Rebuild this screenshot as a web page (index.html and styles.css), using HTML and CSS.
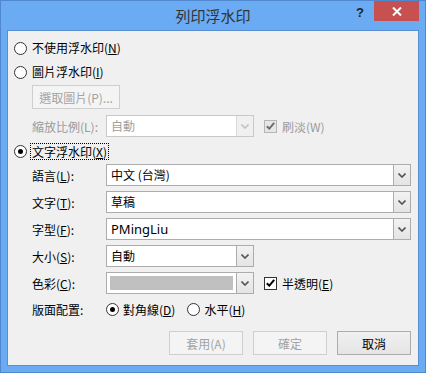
FILE: index.html
```html
<!DOCTYPE html>
<html lang="zh-Hant">
<head>
  <meta charset="UTF-8">
  <title>列印浮水印</title>
  <link rel="stylesheet" href="styles.css">
</head>
<body>
  <div class="window">
    <div class="titlebar">
      <div class="title">列印浮水印</div>
      <div class="controls">
        <span class="help">?</span>
        <span class="close">
          <svg width="10" height="9" viewBox="0 0 10 9"><path d="M1 0.5 L9 8.5 M9 0.5 L1 8.5" stroke="#fff" stroke-width="2"/></svg>
        </span>
      </div>
    </div>

    <div class="panel">
      <div class="opt first">
        <span class="radio"></span>
        <span>不使用浮水印(<u>N</u>)</span>
      </div>
      <div class="opt second">
        <span class="radio"></span>
        <span>圖片浮水印(<u>I</u>)</span>
      </div>

      <div class="indent">
        <button class="btn pick" disabled>選取圖片(P)...</button>

        <div class="field scale">
          <span class="label dim">縮放比例(L):</span>
          <div class="combo short off">
            <span class="value">自動</span>
            <span class="arrow"><svg width="8" height="5" viewBox="0 0 8 5"><path d="M0.5 0.5 L4 4 L7.5 0.5" fill="none" stroke="#c2c2c2" stroke-width="1.6"/></svg></span>
          </div>
          <span class="check off">
            <svg width="9" height="8" viewBox="0 0 9 8"><path d="M0.8 4.2 L3.3 6.6 L8.2 0.8" fill="none" stroke="#6d6d6d" stroke-width="2"/></svg>
          </span>
          <span class="dim">刷淡(W)</span>
        </div>
      </div>

      <div class="opt third">
        <span class="radio on"></span>
        <span class="focus">文字浮水印(<u>X</u>)</span>
      </div>

      <div class="indent">
        <div class="field lang">
          <span class="label">語言(<u>L</u>):</span>
          <div class="combo long">
            <span class="value">中文 (台灣)</span>
            <span class="arrow"><svg width="8" height="5" viewBox="0 0 8 5"><path d="M0.5 0.5 L4 4 L7.5 0.5" fill="none" stroke="#555" stroke-width="1.6"/></svg></span>
          </div>
        </div>
        <div class="field">
          <span class="label">文字(<u>T</u>):</span>
          <div class="combo long">
            <span class="value">草稿</span>
            <span class="arrow"><svg width="8" height="5" viewBox="0 0 8 5"><path d="M0.5 0.5 L4 4 L7.5 0.5" fill="none" stroke="#555" stroke-width="1.6"/></svg></span>
          </div>
        </div>
        <div class="field">
          <span class="label">字型(<u>F</u>):</span>
          <div class="combo long">
            <span class="value latin">PMingLiu</span>
            <span class="arrow"><svg width="8" height="5" viewBox="0 0 8 5"><path d="M0.5 0.5 L4 4 L7.5 0.5" fill="none" stroke="#555" stroke-width="1.6"/></svg></span>
          </div>
        </div>
        <div class="field">
          <span class="label">大小(<u>S</u>):</span>
          <div class="combo short">
            <span class="value">自動</span>
            <span class="arrow"><svg width="8" height="5" viewBox="0 0 8 5"><path d="M0.5 0.5 L4 4 L7.5 0.5" fill="none" stroke="#555" stroke-width="1.6"/></svg></span>
          </div>
        </div>
        <div class="field">
          <span class="label">色彩(<u>C</u>):</span>
          <div class="combo short">
            <span class="swatch"></span>
            <span class="arrow"><svg width="8" height="5" viewBox="0 0 8 5"><path d="M0.5 0.5 L4 4 L7.5 0.5" fill="none" stroke="#555" stroke-width="1.6"/></svg></span>
          </div>
          <span class="check">
            <svg width="9" height="8" viewBox="0 0 9 8"><path d="M0.8 4.2 L3.3 6.6 L8.2 0.8" fill="none" stroke="#000" stroke-width="2"/></svg>
          </span>
          <span>半透明(<u>E</u>)</span>
        </div>

        <div class="field layout">
          <span class="label">版面配置:</span>
          <span class="radio on"></span>
          <span class="rtext">對角線(<u>D</u>)</span>
          <span class="radio"></span>
          <span class="rtext">水平(<u>H</u>)</span>
        </div>
      </div>

      <div class="buttons">
        <button class="btn" disabled>套用(A)</button>
        <button class="btn" disabled>確定</button>
        <button class="btn main">取消</button>
      </div>
    </div>
  </div>
</body>
</html>
```

FILE: styles.css
```css
body {
  margin: 0;
  font-family: "Noto Sans CJK TC", "Noto Sans", sans-serif;
  font-size: 12px;
  color: #000;
}
u {
  text-decoration: underline;
  text-underline-offset: 1px;
}
.window {
  width: 426px;
  height: 373px;
  box-sizing: border-box;
  background: #6aabf4;
  border: 1px solid #4f88cc;
  padding: 0 6px 6px;
  display: flex;
  flex-direction: column;
}
.titlebar {
  height: 29px;
  display: grid;
  grid-template-columns: 1fr auto 1fr;
  align-items: start;
}
.title {
  grid-column: 2;
  font-size: 15px;
  line-height: 29px;
  color: #333;
}
.controls {
  display: flex;
  justify-content: flex-end;
  align-items: flex-start;
}
.help {
  font-family: "Liberation Sans", sans-serif;
  font-weight: bold;
  font-size: 13px;
  line-height: 13px;
  color: #222;
  margin: 5px 10px 0 0;
}
.close {
  width: 45px;
  height: 20px;
  background: #c75050;
  display: flex;
  align-items: center;
  justify-content: center;
}
.panel {
  flex: 1;
  background: #f0f0f0;
  border: 1px solid #5a90d2;
  padding: 9px 7px 0 6px;
  display: flex;
  flex-direction: column;
}
.opt {
  display: flex;
  align-items: center;
  gap: 5px;
  height: 16px;
  line-height: 16px;
}
.second {
  margin-top: 8px;
}
.third {
  margin-top: 6px;
  height: 17px;
  gap: 3px;
}
.radio {
  width: 13px;
  height: 13px;
  box-sizing: border-box;
  border: 1px solid #333;
  border-radius: 50%;
  background: #fff;
  display: grid;
  place-items: center;
  flex: none;
}
.radio.on::after {
  content: "";
  width: 5px;
  height: 5px;
  border-radius: 50%;
  background: #000;
}
.focus {
  border: 1px dotted #000;
  padding: 0 1px;
  line-height: 15px;
}
.indent {
  margin-left: 18px;
  display: flex;
  flex-direction: column;
}
.btn {
  font-family: inherit;
  font-size: 12px;
  height: 24px;
  width: 74px;
  padding: 0;
  box-sizing: border-box;
  border: 1px solid #acacac;
  background: linear-gradient(#f0f0f0, #e5e5e5);
  color: #000;
}
.btn:disabled {
  border-color: #cfcfcf;
  background: #f4f4f4;
  color: #a3a3a3;
}
.pick {
  width: 88px;
  margin-top: 5px;
}
.field {
  display: flex;
  align-items: center;
  height: 22px;
  margin-top: 5px;
}
.scale {
  margin-top: 6px;
}
.lang {
  margin-top: 4px;
}
.label {
  width: 74px;
  flex: none;
}
.dim {
  color: #9a9a9a;
}
.combo {
  display: flex;
  height: 22px;
  box-sizing: border-box;
  border: 1px solid #acacac;
  background: #fff;
}
.combo.long {
  width: 305px;
}
.combo.short {
  width: 148px;
}
.value {
  flex: 1;
  padding-left: 4px;
  line-height: 20px;
}
.latin {
  font-family: "Noto Sans", sans-serif;
  font-size: 13px;
}
.arrow {
  width: 16px;
  border-left: 1px solid #acacac;
  background: linear-gradient(#f2f2f2, #e4e4e4);
  display: grid;
  place-items: center;
}
.combo.off {
  border-color: #c9c9c9;
}
.combo.off .value {
  color: #a0a0a0;
}
.combo.off .arrow {
  border-left-color: #d9d9d9;
  background: #f0f0f0;
}
.swatch {
  flex: 1;
  margin: 3px 3px 3px 3px;
  background: #c0c0c0;
}
.check {
  width: 13px;
  height: 13px;
  box-sizing: border-box;
  border: 1px solid #333;
  background: #fff;
  display: grid;
  place-items: center;
  margin: 0 5px 0 10px;
}
.check.off {
  border-color: #b5b5b5;
  background: #e6e6e6;
}
.layout {
  height: 16px;
  margin-top: 7px;
}
.layout .rtext {
  margin-left: 4px;
  margin-right: 12px;
}
.buttons {
  display: flex;
  justify-content: flex-end;
  gap: 10px;
  margin-top: 14px;
}
```
